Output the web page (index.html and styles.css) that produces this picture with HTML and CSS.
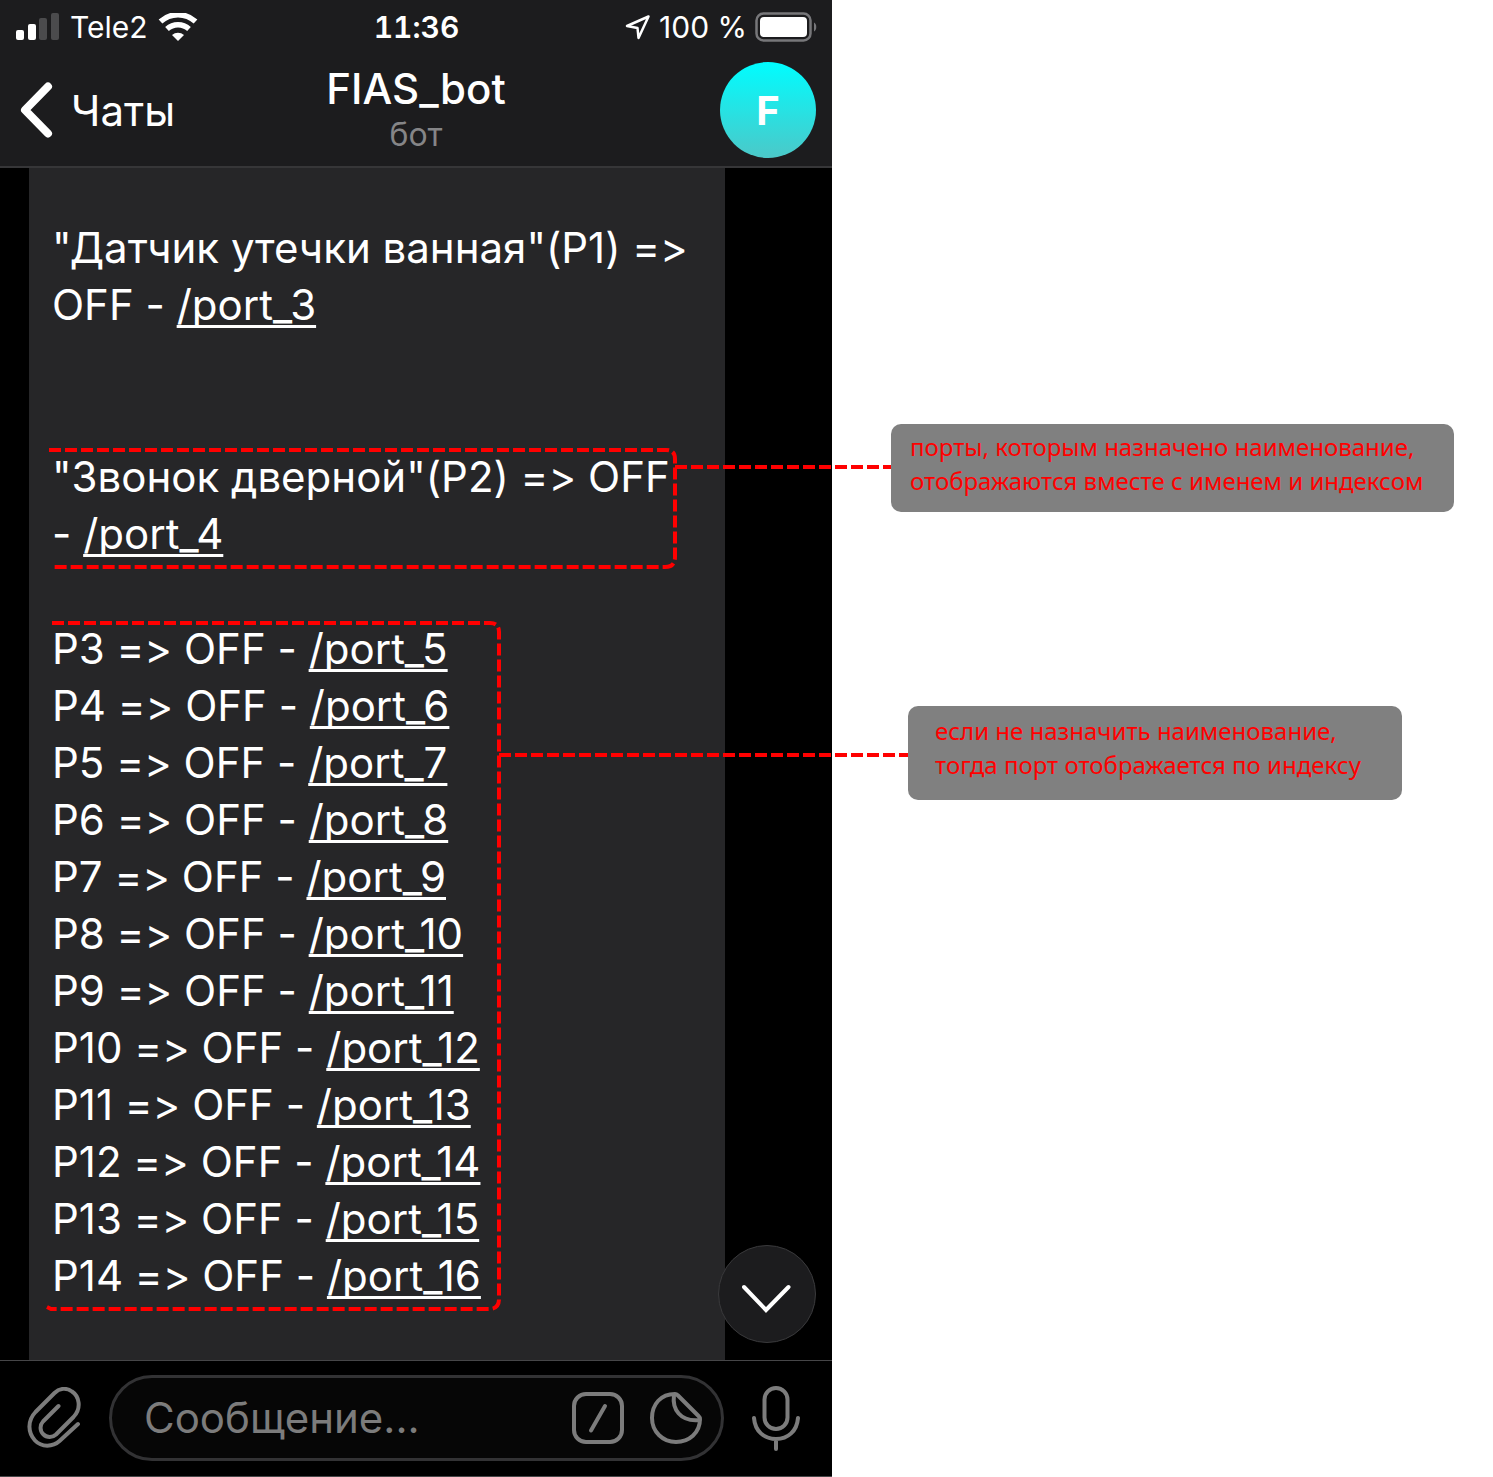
FILE: index.html
```html
<!DOCTYPE html>
<html lang="ru">
<head>
<meta charset="utf-8">
<meta name="viewport" content="width=device-width, initial-scale=1">
<title>FIAS_bot</title>
<link rel="stylesheet" href="styles.css">
</head>
<body>
<div class="page">
  <main class="phone">
    <header class="top">
      <div class="status">
        <div class="status-left">
          <svg width="44" height="28" viewBox="0 0 44 28" aria-hidden="true">
            <rect x="0" y="17" width="8" height="10" rx="2" fill="#fff"/>
            <rect x="12" y="11" width="8" height="16" rx="2" fill="#fff"/>
            <rect x="23" y="5" width="8" height="22" rx="2" fill="#4b4b4d"/>
            <rect x="35" y="0" width="8" height="27" rx="2" fill="#4b4b4d"/>
          </svg>
          <span>Tele2</span>
          <svg width="40" height="28" viewBox="0 0 40 28" fill="none" stroke="#fff" aria-hidden="true">
            <path d="M2.500 8.500a26 26 0 0 1 35 0" stroke-width="5.500"/>
            <path d="M9 16a16.500 16.500 0 0 1 22 0" stroke-width="5.500"/>
            <path d="M14 22a9.500 9.500 0 0 1 12 0L20 28z" fill="#fff" stroke="none"/>
          </svg>
        </div>
        <time class="clock">11:36</time>
        <div class="status-right">
          <svg width="26" height="26" viewBox="0 0 26 26" fill="none" stroke="#fff" stroke-width="2.500" stroke-linejoin="round" aria-hidden="true">
            <path d="M23.500 2.500L2 12l10.500 2 1 10z"/>
          </svg>
          <span>100 %</span>
          <svg width="62" height="30" viewBox="0 0 62 30" aria-hidden="true">
            <rect x="1.500" y="1.500" width="54" height="27" rx="7" fill="none" stroke="#77777a" stroke-width="2.500"/>
            <rect x="5" y="5" width="47" height="20" rx="4" fill="#fff"/>
            <path d="M59 10.500c3 1 3 8 0 9z" fill="#77777a"/>
          </svg>
        </div>
      </div>
      <div class="nav">
        <a class="back" href="#chats">
          <svg width="34" height="56" viewBox="0 0 34 56" fill="none" stroke="#fff" stroke-width="8" stroke-linecap="round" stroke-linejoin="round" aria-hidden="true">
            <path d="M28 4.500L5 28 28 51.500"/>
          </svg>
          <span>Чаты</span>
        </a>
        <div class="title">
          <h1>FIAS_bot</h1>
          <p>бот</p>
        </div>
        <a class="avatar" href="#profile">F</a>
      </div>
    </header>

    <section class="chat">
      <div class="bubble">
        <p class="group">"Датчик утечки ванная"(P1) =&gt;<br>OFF - <a href="#3">/port_3</a></p>
        <p class="group named">"Звонок дверной"(P2) =&gt; OFF<br>- <a href="#4">/port_4</a>
          <svg class="frame" width="632" height="124" viewBox="0 0 632 124" aria-hidden="true">
            <path d="M0 2H617Q626 2 626 11V109Q626 119 616 119H4"/>
          </svg>
        </p>
        <p class="group indexed">
          P3 =&gt; OFF - <a href="#5">/port_5</a><br>
          P4 =&gt; OFF - <a href="#6">/port_6</a><br>
          P5 =&gt; OFF - <a href="#7">/port_7</a><br>
          P6 =&gt; OFF - <a href="#8">/port_8</a><br>
          P7 =&gt; OFF - <a href="#9">/port_9</a><br>
          P8 =&gt; OFF - <a href="#10">/port_10</a><br>
          P9 =&gt; OFF - <a href="#11">/port_11</a><br>
          P10 =&gt; OFF - <a href="#12">/port_12</a><br>
          P11 =&gt; OFF - <a href="#13">/port_13</a><br>
          P12 =&gt; OFF - <a href="#14">/port_14</a><br>
          P13 =&gt; OFF - <a href="#15">/port_15</a><br>
          P14 =&gt; OFF - <a href="#16">/port_16</a>
          <svg class="frame" width="456" height="692" viewBox="0 0 456 692" aria-hidden="true">
            <path d="M3 3H441Q450 3 450 12V679Q450 689 440 689H2L-2 687"/>
          </svg>
        </p>
      </div>
      <button class="scroll-down" type="button" aria-label="Вниз">
        <svg width="50" height="30" viewBox="0 0 50 30" fill="none" stroke="#fff" stroke-width="4" stroke-linecap="round" aria-hidden="true">
          <path d="M2 4L24 27 46.500 4"/>
        </svg>
      </button>
    </section>

    <footer class="composer">
      <button class="icon" type="button" aria-label="Прикрепить">
        <svg width="54" height="62" viewBox="0 0 54 62" aria-hidden="true">
          <path d="M31.500 19L16 34.500a9.200 9.200 0 0 0 13 13L46.500 30C55 21 52 9 45 4.500C39.500 .5 32.500 1 27.500 6L8.500 25C0 34 1 46 8 53.500C14.500 60.500 26 60 32.500 54L51 37"/>
        </svg>
      </button>
      <div class="field">
        <input type="text" placeholder="Сообщение..." aria-label="Сообщение">
        <button class="icon" type="button" aria-label="Команды">
          <svg width="52" height="52" viewBox="0 0 52 52" aria-hidden="true">
            <rect x="2" y="2" width="48" height="48" rx="12"/>
            <path d="M33 14L19 38.500"/>
          </svg>
        </button>
        <button class="icon" type="button" aria-label="Стикеры">
          <svg width="52" height="52" viewBox="0 0 52 52" aria-hidden="true">
            <path d="M25 2C11 2 2 12 2 26s11 24 24 24 24-9 24-23c0-1-.5-2-1.500-3L28 3.500C27 2.500 26 2 25 2z"/>
            <path d="M24 3c-2 14 6 27 25.500 25"/>
          </svg>
        </button>
      </div>
      <button class="icon" type="button" aria-label="Голосовое сообщение">
        <svg width="48" height="66" viewBox="0 0 48 66" aria-hidden="true">
          <rect x="12.500" y="3" width="23" height="41" rx="11.500"/>
          <path d="M2 33c1 13 10 21 22 21s21-8 22-21M24 54v10"/>
        </svg>
      </button>
    </footer>
  </main>

  <aside class="notes">
    <div class="note note-named">
      порты, которым назначено наименование,<br>отображаются вместе с именем и индексом
    </div>
    <div class="note note-indexed">
      если не назначить наименование,<br>тогда порт отображается по индексу
    </div>
  </aside>
</div>
</body>
</html>
```

FILE: styles.css
```css
* {
  box-sizing: border-box;
}

body {
  margin: 0;
  background: #fff;
  font-family: Inter, "Liberation Sans", sans-serif;
  font-feature-settings: "calt" 0;
}

h1,
p {
  margin: 0;
}

svg {
  display: block;
  flex: none;
}

button {
  padding: 0;
  border: 0;
  background: none;
}

.page {
  display: grid;
  grid-template-columns: minmax(0, 832fr) minmax(0, 661fr);
  min-height: 100vh;
}

.phone {
  display: flex;
  flex-direction: column;
  background: #000;
  color: #fff;
}

.top {
  background: #1c1c1e;
  border-bottom: 2px solid #363638;
}

.status {
  display: grid;
  grid-template-columns: 1fr auto 1fr;
  align-items: center;
  height: 54px;
  padding: 0 15px 0 16px;
  font-size: 30px;
}

.status-left,
.status-right {
  display: flex;
  align-items: center;
  gap: 10px;
}

.status-right {
  justify-content: flex-end;
  gap: 8px;
}

.clock {
  font-weight: 600;
  font-variant-numeric: tabular-nums;
}

.nav {
  display: grid;
  grid-template-columns: 1fr auto 1fr;
  align-items: center;
  height: 112px;
  padding: 0 16px;
}

.back {
  display: flex;
  align-items: center;
  gap: 17px;
  padding-left: 4px;
  color: #fff;
  font-size: 42px;
  text-decoration: none;
}

.title {
  text-align: center;
}

.title h1 {
  font-size: 42px;
  font-weight: 500;
  line-height: 50px;
}

.title p {
  color: #858587;
  font-size: 32px;
  line-height: 42px;
}

.avatar {
  justify-self: end;
  width: 96px;
  height: 96px;
  border-radius: 50%;
  background: linear-gradient(#00fdff, #4cc8c8);
  color: #fff;
  font-size: 40px;
  font-weight: 700;
  line-height: 98px;
  text-align: center;
  text-decoration: none;
}

.chat {
  position: relative;
  display: flex;
  flex: 1;
  padding: 0 107px 0 29px;
}

.bubble {
  display: flex;
  flex: 1;
  flex-direction: column;
  padding: 51px 0 55px 23px;
  background: #262628;
  font-size: 42px;
  line-height: 57px;
}

.group {
  position: relative;
  white-space: nowrap;
}

.named {
  margin-top: 115px;
}

.indexed {
  margin-top: 58px;
}

.group a {
  color: #fff;
  text-decoration-thickness: 3px;
  text-decoration-skip-ink: none;
  text-underline-offset: 5px;
}

.frame {
  position: absolute;
  top: 0;
  left: -3px;
  overflow: visible;
  fill: none;
  stroke: #f00;
  stroke-width: 4px;
  stroke-dasharray: 12 4;
}

.scroll-down {
  position: absolute;
  right: 16px;
  bottom: 17px;
  display: flex;
  align-items: center;
  justify-content: center;
  width: 98px;
  height: 98px;
  padding-top: 8px;
  border: 1px solid #3a3a3c;
  border-radius: 50%;
  background: #1c1c1e;
}

.composer {
  display: flex;
  align-items: center;
  gap: 28px;
  height: 117px;
  padding: 0 32px 2px 27px;
  border-top: 1px solid #464648;
  border-bottom: 1px solid #464648;
}

.icon {
  fill: none;
  stroke: #7c7c7c;
  stroke-width: 4px;
  stroke-linecap: round;
  stroke-linejoin: round;
}

.field {
  display: flex;
  flex: 1;
  align-items: center;
  gap: 26px;
  min-width: 0;
  height: 86px;
  padding: 0 19px 0 32px;
  border: 3px solid #323234;
  border-radius: 43px;
  background: #060606;
}

.field input {
  flex: 1;
  width: 100%;
  min-width: 0;
  padding: 0;
  border: 0;
  background: none;
  color: #fff;
  font: inherit;
  font-size: 42px;
}

.field input::placeholder {
  color: #7c7c7c;
  opacity: 1;
}

.notes {
  display: flex;
  flex-direction: column;
  align-items: flex-start;
  gap: 194px;
  padding-top: 424px;
}

.note {
  position: relative;
  border-radius: 10px;
  background: #808080;
  color: #f00;
  font-family: "Noto Sans", sans-serif;
  font-size: 24px;
  line-height: 34px;
  white-space: nowrap;
}

.note-named {
  margin-left: 59px;
  padding: 6px 31px 14px 19px;
}

.note-indexed {
  margin-left: 76px;
  padding: 8px 41px 18px 27px;
}

/* Dashed leader from the note back to its group of ports */
.note::before {
  position: absolute;
  right: 100%;
  height: 4px;
  background: repeating-linear-gradient(90deg, #f00 0 12px, transparent 12px 16px);
  content: "";
}

.note-named::before {
  top: 41px;
  width: 216px;
}

.note-indexed::before {
  top: 47px;
  width: 409px;
}
```
